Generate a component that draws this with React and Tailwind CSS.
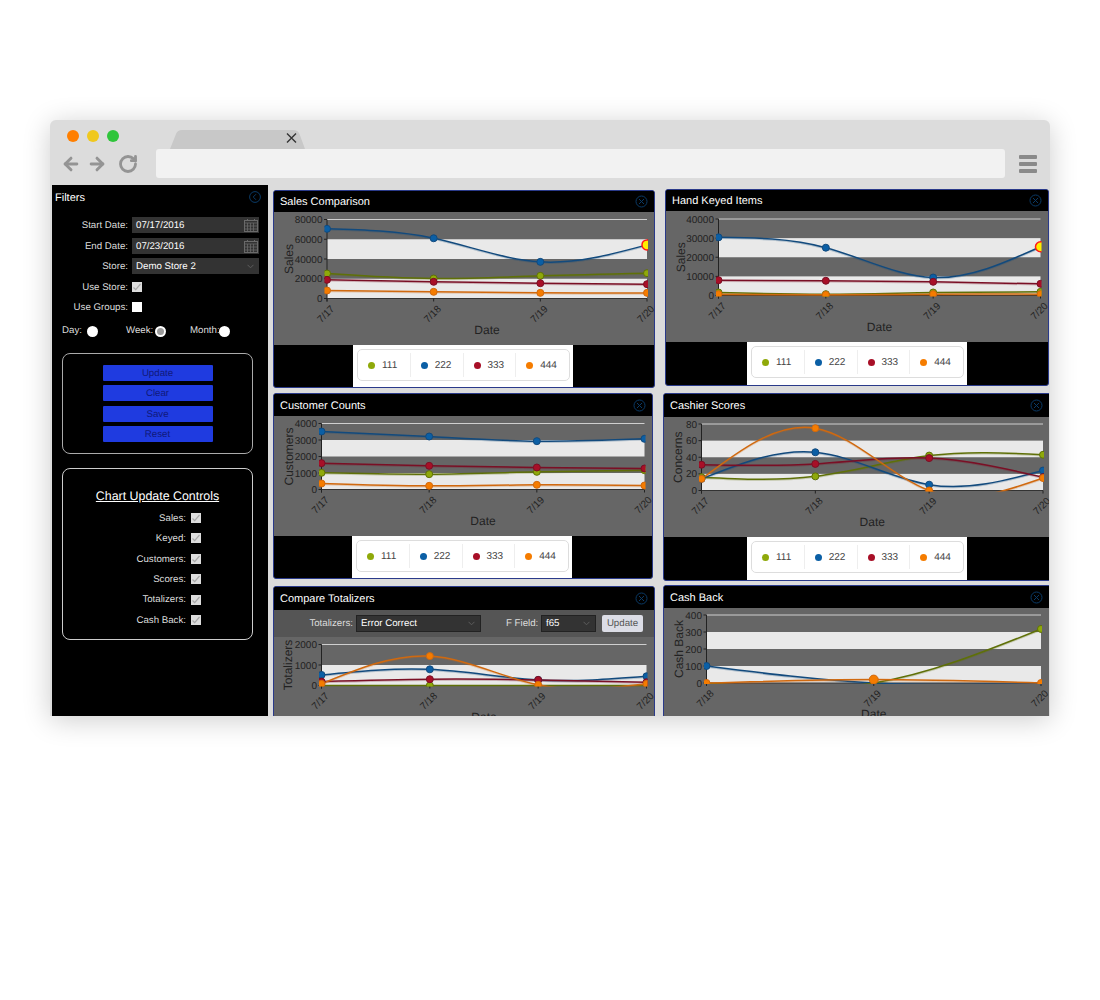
import React from "react";
import { ArrowLeft, ArrowRight, RotateCw } from "lucide-react";

const C = {
  g: { fill: "#8fa90a", stroke: "#5f7008" },
  b: { fill: "#0b5fa5", stroke: "#124a7d" },
  r: { fill: "#a80f27", stroke: "#7a0f25" },
  o: { fill: "#f57c00", stroke: "#d0690f" },
};

function ctrl(x) {
  const n = x.length - 1;
  const a = new Array(n), b = new Array(n), r = new Array(n);
  a[0] = 0; b[0] = 2; r[0] = x[0] + 2 * x[1];
  for (let i = 1; i < n - 1; i++) { a[i] = 1; b[i] = 4; r[i] = 4 * x[i] + 2 * x[i + 1]; }
  a[n - 1] = 2; b[n - 1] = 7; r[n - 1] = 8 * x[n - 1] + x[n];
  for (let i = 1; i < n; i++) { const m = a[i] / b[i - 1]; b[i] -= m; r[i] -= m * r[i - 1]; }
  a[n - 1] = r[n - 1] / b[n - 1];
  for (let i = n - 2; i >= 0; i--) a[i] = (r[i] - a[i + 1]) / b[i];
  b[n - 1] = (x[n] + a[n - 1]) / 2;
  for (let i = 0; i < n - 1; i++) b[i] = 2 * x[i + 1] - a[i + 1];
  return [a, b];
}

function splinePath(pts) {
  const xs = pts.map((p) => p[0]);
  const ys = pts.map((p) => p[1]);
  const [ax, bx] = ctrl(xs);
  const [ay, by] = ctrl(ys);
  let d = `M${xs[0]},${ys[0]}`;
  for (let i = 0; i < xs.length - 1; i++) {
    d += `C${ax[i]},${ay[i]} ${bx[i]},${by[i]} ${xs[i + 1]},${ys[i + 1]}`;
  }
  return d;
}

const FONT = "'Liberation Sans', Arial, sans-serif";

function Chart({ id, w, h, ox, oy, left, right, top, bottom, max, step, yTitle, titleGap, labels, series }) {
  const l = left - ox, rr = right - ox, t = top - oy, bt = bottom - oy;
  const n = Math.round(max / step);
  const band = (bt - t) / n;
  const xAt = (i) => l + ((rr - l) * i) / (labels.length - 1);
  const yAt = (v) => bt - ((bt - t) * v) / max;
  return (
    <svg width={w} height={h} className="block" style={{ fontFamily: FONT }}>
      <defs>
        <clipPath id={id}>
          <rect x={l - 2.5} y={t - 5} width={rr - l + 3.5} height={bt - t + 6} />
        </clipPath>
      </defs>
      {Array.from({ length: n }).map((_, i) =>
        i % 2 === 1 ? <rect key={i} x={l} y={t + band * i} width={rr - l} height={band} fill="#e9e9e9" /> : null
      )}
      <line x1={l} x2={rr} y1={t} y2={t} stroke="#cfcfcf" strokeWidth="1" />
      <line x1={l} x2={l} y1={t} y2={bt + 3} stroke="#222" strokeWidth="1" />
      <line x1={l} x2={rr} y1={bt} y2={bt} stroke="#333" strokeWidth="1" />
      {Array.from({ length: n + 1 }).map((_, i) => (
        <g key={i}>
          <line x1={l - 3} x2={l} y1={t + band * i} y2={t + band * i} stroke="#222" />
          <text x={l - 4.5} y={t + band * i + 3.5} textAnchor="end" fontSize="10" fill="#222">
            {max - step * i}
          </text>
        </g>
      ))}
      {labels.map((lb, i) => (
        <g key={lb}>
          <line x1={xAt(i)} x2={xAt(i)} y1={bt} y2={bt + 3} stroke="#222" />
          <text
            x={xAt(i) + 8}
            y={bt + 11}
            textAnchor="end"
            fontSize="10"
            fill="#222"
            transform={`rotate(-45 ${xAt(i) + 8} ${bt + 11})`}
          >
            {lb}
          </text>
        </g>
      ))}
      <text x={(l + rr) / 2} y={bt + 35} textAnchor="middle" fontSize="12" fill="#222">
        Date
      </text>
      <text
        x={l - titleGap}
        y={(t + bt) / 2}
        textAnchor="middle"
        fontSize="12"
        fill="#222"
        transform={`rotate(-90 ${l - titleGap} ${(t + bt) / 2})`}
      >
        {yTitle}
      </text>
      <g clipPath={`url(#${id})`}>
        {series.map((s, si) => {
          const pts = s.v.map((v, i) => [xAt(i), yAt(v)]);
          const d = splinePath(pts);
          return (
            <g key={si}>
              <path d={d} transform="translate(0,1)" fill="none" stroke={C[s.c].stroke} strokeOpacity="0.25" strokeWidth="1.5" />
              <path d={d} fill="none" stroke={C[s.c].stroke} strokeWidth="1.5" />
            </g>
          );
        })}
        {series.map((s, si) =>
          s.v.map((v, i) => {
            if (s.hide && s.hide.includes(i)) return null;
            const hot = s.hot === i;
            return (
              <circle
                key={si + "-" + i}
                cx={xAt(i)}
                cy={yAt(v)}
                r={hot ? 5 : s.big === i ? 4.5 : 3.5}
                fill={hot ? "#ffee00" : C[s.c].fill}
                stroke={hot ? "#ff1a1a" : C[s.c].stroke}
                strokeWidth={hot ? 1.5 : 1}
              />
            );
          })
        )}
      </g>
    </svg>
  );
}

function CloseIcon() {
  return (
    <svg width="13" height="13" viewBox="0 0 13 13" fill="none" stroke="#0a3a66" strokeWidth="1">
      <circle cx="6.5" cy="6.5" r="5.5" />
      <path d="M4 4l5 5M9 4l-5 5" />
    </svg>
  );
}

function Legend({ className }) {
  const items = [["111", "bg-[#8fa90a]"], ["222", "bg-[#0b5fa5]"], ["333", "bg-[#a80f27]"], ["444", "bg-[#f57c00]"]];
  return (
    <div className={"w-[220px] h-full bg-white px-[4px] pt-[4px] " + className}>
      <div className="h-[32px] w-[213px] flex items-center rounded-[5px] border border-[#dddddd]">
        {items.map(([t, c], i) => (
          <div
            key={t}
            className={
              "w-[53px] h-[24px] flex items-center pl-[10px] gap-[7px] text-[10px] text-[#444444] " +
              (i < 3 ? "border-r border-[#eeeeee]" : "")
            }
          >
            <span className={"w-[7px] h-[7px] rounded-full " + c} />
            {t}
          </div>
        ))}
      </div>
    </div>
  );
}

function Header({ title, className }) {
  return (
    <div className={"flex items-center justify-between pl-[6px] text-[11px] text-white bg-black " + className}>
      <span className="pt-[2px]">{title}</span>
      <span className="mr-[6px] flex">
        <CloseIcon />
      </span>
    </div>
  );
}

function CheckBox({ checked }) {
  return (
    <span className={"block w-[10px] h-[10px] " + (checked ? "bg-[#dddddd]" : "bg-white")}>
      {checked ? (
        <svg width="10" height="10" viewBox="0 0 10 10" fill="none" stroke="#a8a8a8" strokeWidth="1.2">
          <path d="M1.5 5.5l2.2 2.2L8.5 2" />
        </svg>
      ) : null}
    </span>
  );
}

function Radio({ on }) {
  return (
    <span className="flex items-center justify-center w-[11px] h-[11px] rounded-full bg-white">
      {on ? <span className="block w-[7px] h-[7px] rounded-full bg-[#9a9a9a]" /> : null}
    </span>
  );
}

function Calendar() {
  return (
    <svg width="14" height="13" viewBox="0 0 14 13" fill="none" stroke="#6a6a6a" strokeWidth="1">
      <rect x="0.5" y="1.5" width="13" height="11" />
      <path d="M0.5 4h13M0.5 7h13M0.5 10h13M3.5 4v8M6.5 4v8M9.5 4v8" strokeWidth="0.8" />
      <path d="M3.5 0v2M10.5 0v2" />
    </svg>
  );
}

function Chevron({ stroke = "#5c5c5c" }) {
  return (
    <svg width="7" height="5" viewBox="0 0 7 5" fill="none" stroke={stroke} strokeWidth="1">
      <path d="M0.5 0.8L3.5 3.8L6.5 0.8" />
    </svg>
  );
}

function Sidebar() {
  const dateCls = "w-[127px] h-[16px] bg-[#333333] flex items-center justify-between pl-[4px] pr-[1px] text-white";
  const labelCls = "w-[76px] text-right pt-[2px]";
  return (
    <aside className="w-[216px] ml-[2px] shrink-0 bg-black text-[9.7px] text-[#dddddd] flex flex-col">
      <div className="h-[24px] flex items-center justify-between pl-[3px] pr-[7px] text-[11px] text-white">
        <span className="pt-[2px]">Filters</span>
        <svg width="12" height="12" viewBox="0 0 12 12" fill="none" stroke="#0a3a66" strokeWidth="1">
          <circle cx="6" cy="6" r="5.4" />
          <path d="M7 3.2L4.2 6L7 8.8" />
        </svg>
      </div>
      <div className="mt-[8px] h-[16px] flex items-center gap-[4px]">
        <span className={labelCls}>Start Date:</span>
        <div className={dateCls}><span className="pt-[2px]">07/17/2016</span><Calendar /></div>
      </div>
      <div className="mt-[5px] h-[16px] flex items-center gap-[4px]">
        <span className={labelCls}>End Date:</span>
        <div className={dateCls}><span className="pt-[2px]">07/23/2016</span><Calendar /></div>
      </div>
      <div className="mt-[4px] h-[16px] flex items-center gap-[4px]">
        <span className={labelCls}>Store:</span>
        <div className="w-[127px] h-[16px] bg-[#333333] flex items-center justify-between pl-[4px] pr-[5px] text-white">
          <span className="pt-[2px]">Demo Store 2</span><Chevron />
        </div>
      </div>
      <div className="mt-[5px] h-[16px] flex items-center gap-[4px]">
        <span className={labelCls}>Use Store:</span>
        <CheckBox checked />
      </div>
      <div className="mt-[4px] h-[16px] flex items-center gap-[4px]">
        <span className={labelCls}>Use Groups:</span>
        <CheckBox />
      </div>
      <div className="mt-[8px] h-[16px] flex items-center pl-[10px]">
        <span className="w-[25px] pt-[1px]">Day:</span>
        <Radio />
        <span className="ml-[28px] w-[29px] pt-[1px]">Week:</span>
        <Radio on />
        <span className="ml-[24px] w-[29px] pt-[1px] whitespace-nowrap">Month:</span>
        <Radio />
      </div>
      <div className="mt-[14px] ml-[10px] w-[191px] h-[101px] border border-[#aaaaaa] rounded-[8px] flex flex-col items-center pt-[11px] gap-[4.4px]">
        {["Update", "Clear", "Save", "Reset"].map((t) => (
          <div key={t} className="w-[110px] h-[16px] pt-[2px] bg-[#1f3be0] rounded-[1px] flex items-center justify-center text-[#10197a]">
            {t}
          </div>
        ))}
      </div>
      <div className="mt-[14px] ml-[10px] w-[191px] h-[172px] border border-[#cccccc] rounded-[8px] flex flex-col pt-[19px]">
        <div className="h-[16px] flex items-center justify-center text-[12.4px] text-white underline">Chart Update Controls</div>
        <div className="mt-[6px] flex flex-col gap-[4.4px]">
          {["Sales:", "Keyed:", "Customers:", "Scores:", "Totalizers:", "Cash Back:"].map((t) => (
            <div key={t} className="h-[16px] flex items-center gap-[5px]">
              <span className="w-[123px] text-right pt-[2px]">{t}</span>
              <CheckBox checked />
            </div>
          ))}
        </div>
      </div>
    </aside>
  );
}

const L4 = ["7/17", "7/18", "7/19", "7/20"];

export default function App() {
  return (
    <div className="w-[1100px] h-[1000px] bg-white pt-[120px] pl-[50px] [text-rendering:geometricPrecision]" style={{ fontFamily: FONT }}>
      <div className="w-[1000px] h-[596px] rounded-t-[6px] bg-[#dcdcdc] shadow-[0_4px_28px_rgba(0,0,0,0.2)] flex flex-col overflow-hidden">
        <div className="h-[29px] shrink-0 flex items-start">
          <div className="ml-[17px] mt-[10px] flex gap-[8px]">
            <span className="w-[12px] h-[12px] rounded-full bg-[#ff7f00]" />
            <span className="w-[12px] h-[12px] rounded-full bg-[#f0c81e]" />
            <span className="w-[12px] h-[12px] rounded-full bg-[#2fc53b]" />
          </div>
          <svg width="135" height="19" viewBox="0 0 135 19" className="ml-[51px] mt-[10px]">
            <path d="M0 19L6 4Q7.5 0 12 0H123Q128 0 129.5 4L135 19Z" fill="#c8c8c8" />
            <path d="M117 3.5L126 12.5M126 3.5L117 12.5" stroke="#333" strokeWidth="1.4" />
          </svg>
        </div>
        <div className="h-[36px] shrink-0 flex items-start">
          <span className="ml-[11px] mt-[5px] text-[#949494]"><ArrowLeft size={20} strokeWidth={3.5} /></span>
          <span className="ml-[6px] mt-[5px] text-[#949494]"><ArrowRight size={20} strokeWidth={3.5} /></span>
          <span className="ml-[11px] mt-[5px] text-[#949494]"><RotateCw size={20} strokeWidth={3.4} /></span>
          <div className="ml-[18px] w-[849px] h-[29px] bg-[#f2f2f2] rounded-[3px]" />
          <div className="ml-[14px] mt-[6px] w-[18px] flex flex-col gap-[3px]">
            <span className="h-[4px] rounded-[1px] bg-[#8a8a8a]" />
            <span className="h-[4px] rounded-[1px] bg-[#8a8a8a]" />
            <span className="h-[4px] rounded-[1px] bg-[#8a8a8a]" />
          </div>
        </div>
        <div className="flex-1 flex min-h-0">
          <Sidebar />
          <main className="flex-1 flex min-w-0 overflow-hidden mr-px">
            <div className="ml-[5px] w-[382px] shrink-0 flex flex-col pt-[5px]">
              <section className="w-[382px] h-[198px] shrink-0 border border-[#2a3a8a] rounded-[3px] overflow-hidden bg-black">
                <Header title="Sales Comparison" className="h-[21px]" />
                <div className="h-[133px] bg-[#666666]">
                  <Chart id="c1" w={380} h={133} ox={274} oy={212} left={327} right={647} top={219.5} bottom={298.5} max={80000} step={20000} yTitle="Sales" titleGap={34} labels={L4}
                    series={[
                      { c: "g", v: [25300, 20250, 22950, 25650] },
                      { c: "b", v: [70550, 61000, 37100, 54300], hot: 3 },
                      { c: "r", v: [18900, 16900, 15500, 14500] },
                      { c: "o", v: [8100, 6750, 5700, 5700] },
                    ]} />
                </div>
                <div className="h-[42px]"><Legend className="ml-[79px]" /></div>
              </section>
              <section className="mt-[5px] w-[380px] h-[186px] shrink-0 border border-[#2a3a8a] rounded-[3px] overflow-hidden bg-black">
                <Header title="Customer Counts" className="h-[22px]" />
                <div className="h-[120px] bg-[#666666]">
                  <Chart id="c3" w={378} h={120} ox={274} oy={416} left={321.5} right={644.5} top={423.5} bottom={489.5} max={4000} step={1000} yTitle="Customers" titleGap={29} labels={L4}
                    series={[
                      { c: "g", v: [1010, 930, 1070, 1170] },
                      { c: "b", v: [3515, 3212, 2930, 3070] },
                      { c: "r", v: [1596, 1434, 1333, 1273] },
                      { c: "o", v: [364, 222, 283, 242] },
                    ]} />
                </div>
                <div className="h-[42px]"><Legend className="ml-[78px]" /></div>
              </section>
              <section className="mt-[7px] w-[382px] h-[160px] shrink-0 border border-[#2a3a8a] rounded-[3px] overflow-hidden bg-black">
                <Header title="Compare Totalizers" className="h-[23px]" />
                <div className="h-[27px] bg-[#555555] flex items-center text-[9.7px] text-[#dddddd]">
                  <span className="ml-[35px] w-[44px] pt-[2px] text-right whitespace-nowrap">Totalizers:</span>
                  <div className="ml-[3px] w-[125px] h-[17px] bg-[#333333] border border-[#222222] flex items-center justify-between pl-[4px] pr-[5px] text-white">
                    <span className="pt-[2px]">Error Correct</span><Chevron />
                  </div>
                  <span className="ml-[25px] w-[32px] pt-[2px] text-right whitespace-nowrap">F Field:</span>
                  <div className="ml-[3px] w-[55px] h-[17px] bg-[#333333] border border-[#222222] flex items-center justify-between pl-[4px] pr-[5px] text-white">
                    <span className="pt-[2px]">f65</span><Chevron />
                  </div>
                  <div className="ml-[6px] w-[41px] h-[17px] pt-[2px] rounded-[2px] bg-[#dcdde6] flex items-center justify-center text-[#555555]">Update</div>
                </div>
                <div className="h-[110px] bg-[#666666]">
                  <Chart id="c5" w={380} h={110} ox={274} oy={637} left={321.5} right={646.5} top={644.5} bottom={685.5} max={2000} step={1000} yTitle="Totalizers" titleGap={30} labels={L4}
                    series={[
                      { c: "g", v: [0, 0, 0, 0], hide: [0, 2, 3] },
                      { c: "b", v: [516, 790, 274, 450] },
                      { c: "r", v: [193, 306, 274, 161] },
                      { c: "o", v: [80, 1435, 32, 80] },
                    ]} />
                </div>
              </section>
            </div>
            <div className="ml-[8px] w-[392px] shrink-0 flex flex-col pt-[4px]">
              <section className="ml-[2px] w-[384px] h-[197px] shrink-0 border border-[#2a3a8a] rounded-[3px] overflow-hidden bg-black">
                <Header title="Hand Keyed Items" className="h-[21px]" />
                <div className="h-[131px] bg-[#666666]">
                  <Chart id="c2" w={382} h={131} ox={666} oy={211} left={718.5} right={1040.5} top={219} bottom={295.5} max={40000} step={10000} yTitle="Sales" titleGap={34} labels={L4}
                    series={[
                      { c: "g", v: [1570, 700, 1570, 1900] },
                      { c: "b", v: [30400, 25000, 9400, 25500], hot: 3 },
                      { c: "r", v: [8000, 7700, 7160, 6100] },
                      { c: "o", v: [700, 350, 700, 700] },
                    ]} />
                </div>
                <div className="h-[43px]"><Legend className="ml-[81px]" /></div>
              </section>
              <section className="mt-[7px] w-[392px] h-[188px] shrink-0 border border-[#2a3a8a] rounded-[3px] overflow-hidden bg-black">
                <div className="w-[385px]"><Header title="Cashier Scores" className="h-[23px]" /></div>
                <div className="h-[120px] bg-[#666666]">
                  <Chart id="c4" w={390} h={120} ox={664} oy={417} left={701.5} right={1043} top={424} bottom={490.5} max={80} step={20} yTitle="Concerns" titleGap={19.5} labels={L4}
                    series={[
                      { c: "g", v: [16, 17, 42, 43] },
                      { c: "b", v: [14, 46, 7, 24] },
                      { c: "r", v: [31, 32, 39, 16] },
                      { c: "o", v: [14, 75, 0, 15] },
                    ]} />
                </div>
                <div className="h-[43px]"><Legend className="ml-[83px]" /></div>
              </section>
              <section className="mt-[4px] w-[392px] h-[160px] shrink-0 border border-[#2a3a8a] rounded-[3px] overflow-hidden bg-black">
                <div className="w-[385px]"><Header title="Cash Back" className="h-[22px]" /></div>
                <div className="h-[120px] bg-[#666666]">
                  <Chart id="c6" w={390} h={120} ox={664} oy={608} left={706.5} right={1041} top={615} bottom={683} max={400} step={100} yTitle="Cash Back" titleGap={24} labels={["7/18", "7/19", "7/20"]}
                    series={[
                      { c: "b", v: [100, 0, 0], hide: [1, 2] },
                      { c: "g", v: [0, 0, 318], hide: [0, 1] },
                      { c: "o", v: [0, 20, 0], big: 1 },
                    ]} />
                </div>
              </section>
            </div>
          </main>
        </div>
      </div>
    </div>
  );
}
